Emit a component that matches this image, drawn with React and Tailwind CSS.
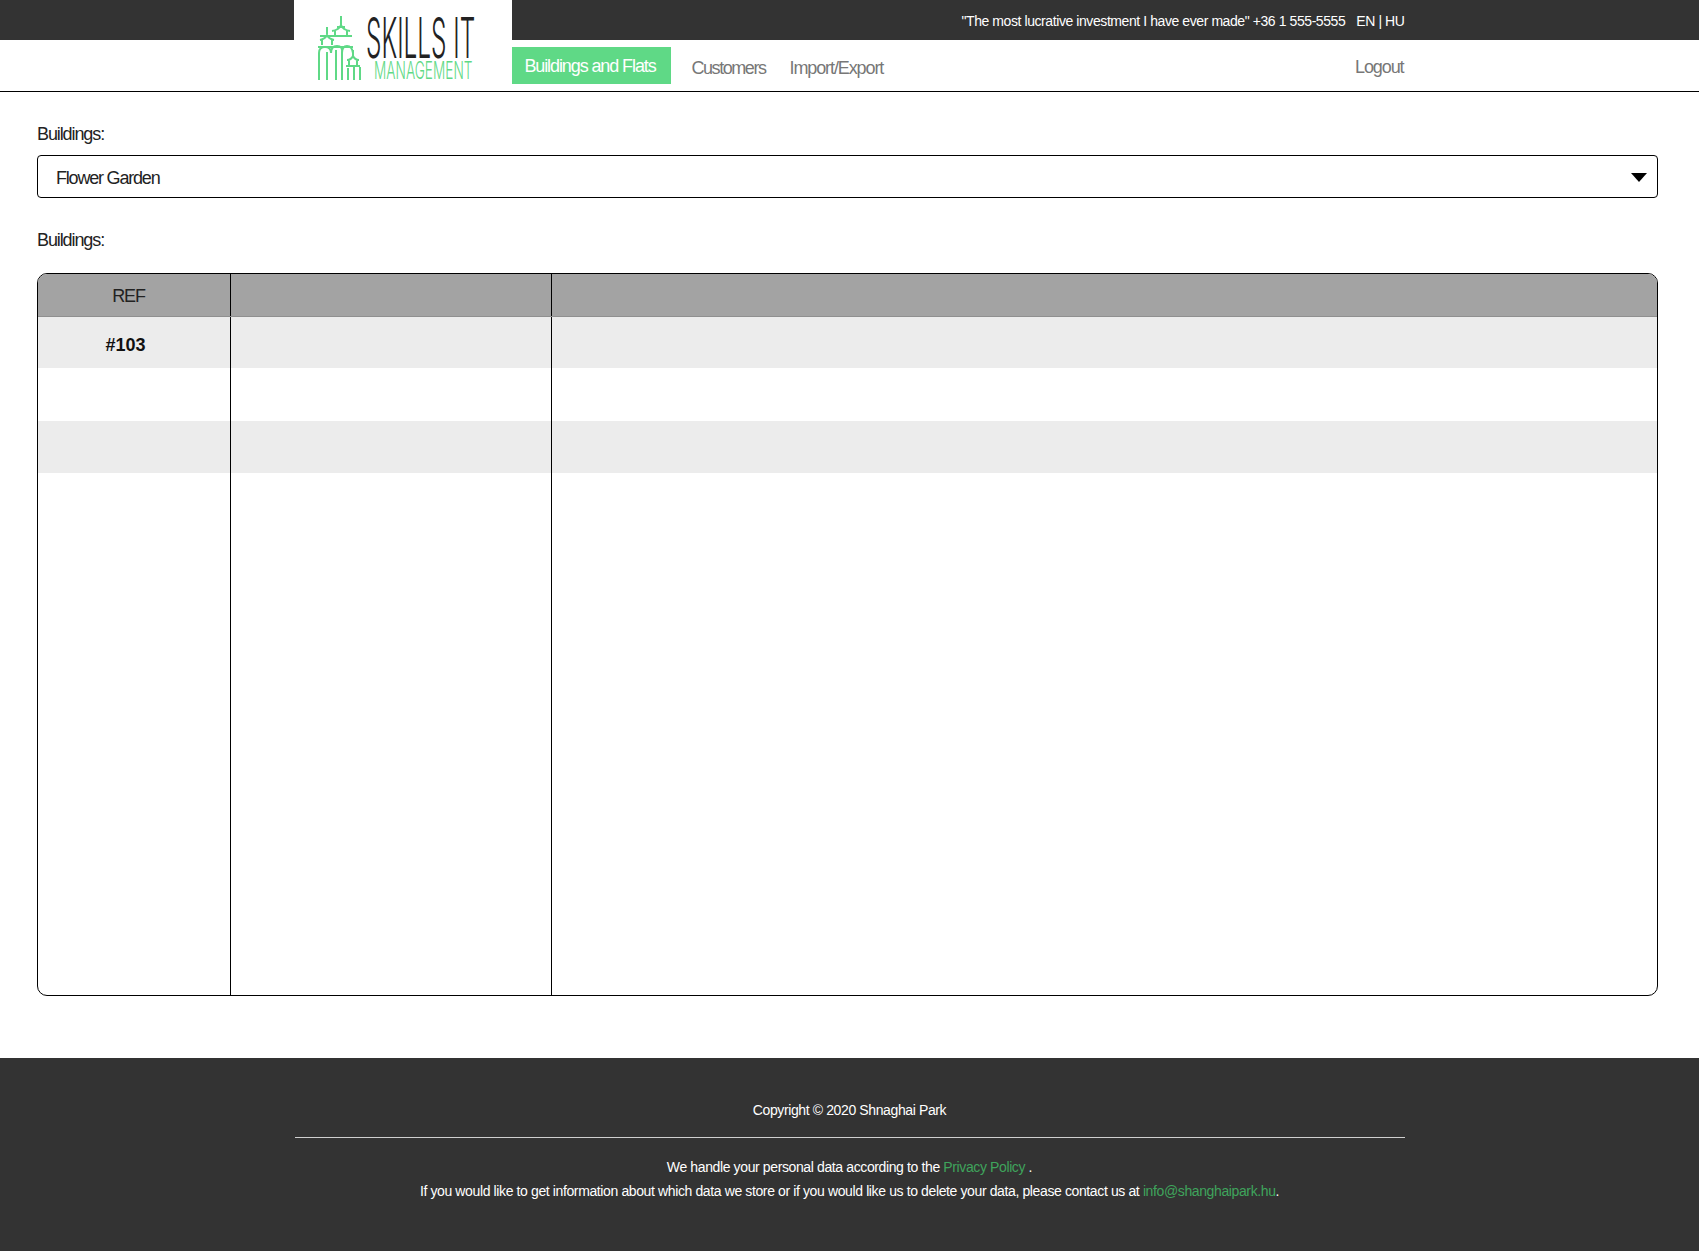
const font = 'font-["Liberation_Sans",Arial,sans-serif]'

function Logo() {
  return (
    <svg width="218" height="90" viewBox="0 0 218 90" aria-label="Skills IT Management">
      {/* towers */}
      <g fill="none" stroke="#5fd986" strokeWidth="2">
        <path d="M47 16v9M38 31q7-1 9-6q2 5 9 6M41 31v5M53 31v5M43 27h8" />
        <path d="M33 27v7M26 40q5-1 7-5q2 4 7 5M28 40v5M38 40v5" />
        <path d="M24 47h35M26 36h32" />
        <path d="M25 80V53q0-6 6-6t6 6M37 53q0-7 6-7t5 7M48 53q0-7 5-7t6 7" />
        <path d="M33 80V52M42 80V50M48 80V52" />
        <path d="M59 50v6M53 60q4 0 6-4q2 4 6 4M55 60v5M63 60v5M52 66h14" />
        <path d="M54 80V68M60 80V67M66 80V67" />
      </g>
      {/* wordmark */}
      <text
        transform="translate(72 58) scale(0.435 1)"
        fontFamily="Inter, 'Liberation Sans', sans-serif"
        fontSize="56"
        fontWeight="300"
        fill="#222"
      >
        SKILLS IT
      </text>
      <text
        transform="translate(80 79) scale(0.57 1)"
        fontFamily="Inter, 'Liberation Sans', sans-serif"
        fontSize="24"
        fontWeight="300"
        fill="#5fd986"
      >
        MANAGEMENT
      </text>
    </svg>
  )
}

function Header() {
  return (
    <header className="relative h-[92px] border-b border-black">
      <div className="h-10 bg-[#333333]">
        <div className="mx-auto flex h-full w-[1112px] items-center justify-end pr-[1px] pt-[2px] text-[14px] tracking-[-0.42px] text-white">
          <span>"The most lucrative investment I have ever made" +36 1 555-5555</span>
          <span className="ml-[11px]">EN | HU</span>
        </div>
      </div>
      <div className="mx-auto flex h-[51px] w-[1112px]">
        <div className="z-10 -mt-10 h-[90px] w-[218px] bg-white">
          <Logo />
        </div>
        <nav className="flex flex-1 items-start text-[18px] tracking-[-1.1px] text-[#777777]">
          <a className="mt-[7px] flex h-[37px] w-[159px] items-center justify-center bg-[#5fd986] pr-[2px] pt-[2px] text-white">
            Buildings and Flats
          </a>
          <a className="ml-[21px] mt-[16px] leading-[24px] tracking-[-1.45px]">Customers</a>
          <a className="ml-6 mt-[16px] leading-[24px]">Import/Export</a>
          <a className="ml-auto mr-[2px] mt-[15px] leading-[24px]">Logout</a>
        </nav>
      </div>
    </header>
  )
}

const rows = [
  { ref: '#103', cls: 'h-[51px] bg-[#ececec]' },
  { ref: '', cls: 'h-[53px] bg-white' },
  { ref: '', cls: 'h-[52px] bg-[#ececec]' },
]

function BuildingsTable() {
  return (
    <div className="mt-5 flex h-[723px] flex-col overflow-hidden rounded-[10px] border border-black">
      <div className="flex h-[43px] shrink-0 border-b border-[#8f8f8f] bg-[#a3a3a3]">
        <div className="flex w-[193px] items-center justify-center border-r border-black pr-[11px] pt-[2px]">REF</div>
        <div className="w-[321px] border-r border-black" />
        <div className="flex-1" />
      </div>
      {rows.map((row, i) => (
        <div key={i} className={`flex shrink-0 ${row.cls}`}>
          <div className="flex w-[193px] items-center justify-center border-r border-black pr-[17px] pt-[6px] font-bold tracking-normal text-[#111]">{row.ref}</div>
          <div className="w-[321px] border-r border-black" />
          <div className="flex-1" />
        </div>
      ))}
      <div className="flex flex-1">
        <div className="w-[193px] border-r border-black" />
        <div className="w-[321px] border-r border-black" />
        <div className="flex-1" />
      </div>
    </div>
  )
}

function Footer() {
  return (
    <footer className="h-[193px] bg-[#333333] pt-[39px] text-center text-[14px] tracking-[-0.38px] text-white">
      <div className="mx-auto w-[1110px]">
        <p className="h-[41px] border-b border-[#cfcfcf] leading-[26px]">Copyright © 2020 Shnaghai Park</p>
        <p className="mt-[17px] leading-[24px]">
          We handle your personal data according to the <a className="text-[#3fa45c]">Privacy Policy</a> .
        </p>
        <p className="leading-[24px]">
          If you would like to get information about which data we store or if you would like us to delete your data, please contact us at <a className="text-[#3fa45c]">info@shanghaipark.hu</a>.
        </p>
      </div>
    </footer>
  )
}

export default function App() {
  return (
    <div className={`${font} min-h-[1251px] bg-white text-[18px] text-[#222]`}>
      <Header />
      <main className="h-[966px] pl-[37px] pr-[41px] pt-[29px] tracking-[-1.1px]">
        <label className="block leading-[26px]">Buildings:</label>
        <div className="relative mt-2">
          <select className="h-[43px] w-full appearance-none rounded-[4px] border border-black bg-white pl-[18px] pt-[2px] leading-[26px] tracking-[-1.2px] outline-none">
            <option>Flower Garden</option>
          </select>
          <svg className="pointer-events-none absolute right-[11px] top-[18px]" width="16" height="9" viewBox="0 0 16 9">
            <path d="M0 0h16L8 9z" fill="#000" />
          </svg>
        </div>
        <label className="mt-[29px] block leading-[26px]">Buildings:</label>
        <BuildingsTable />
      </main>
      <Footer />
    </div>
  )
}
